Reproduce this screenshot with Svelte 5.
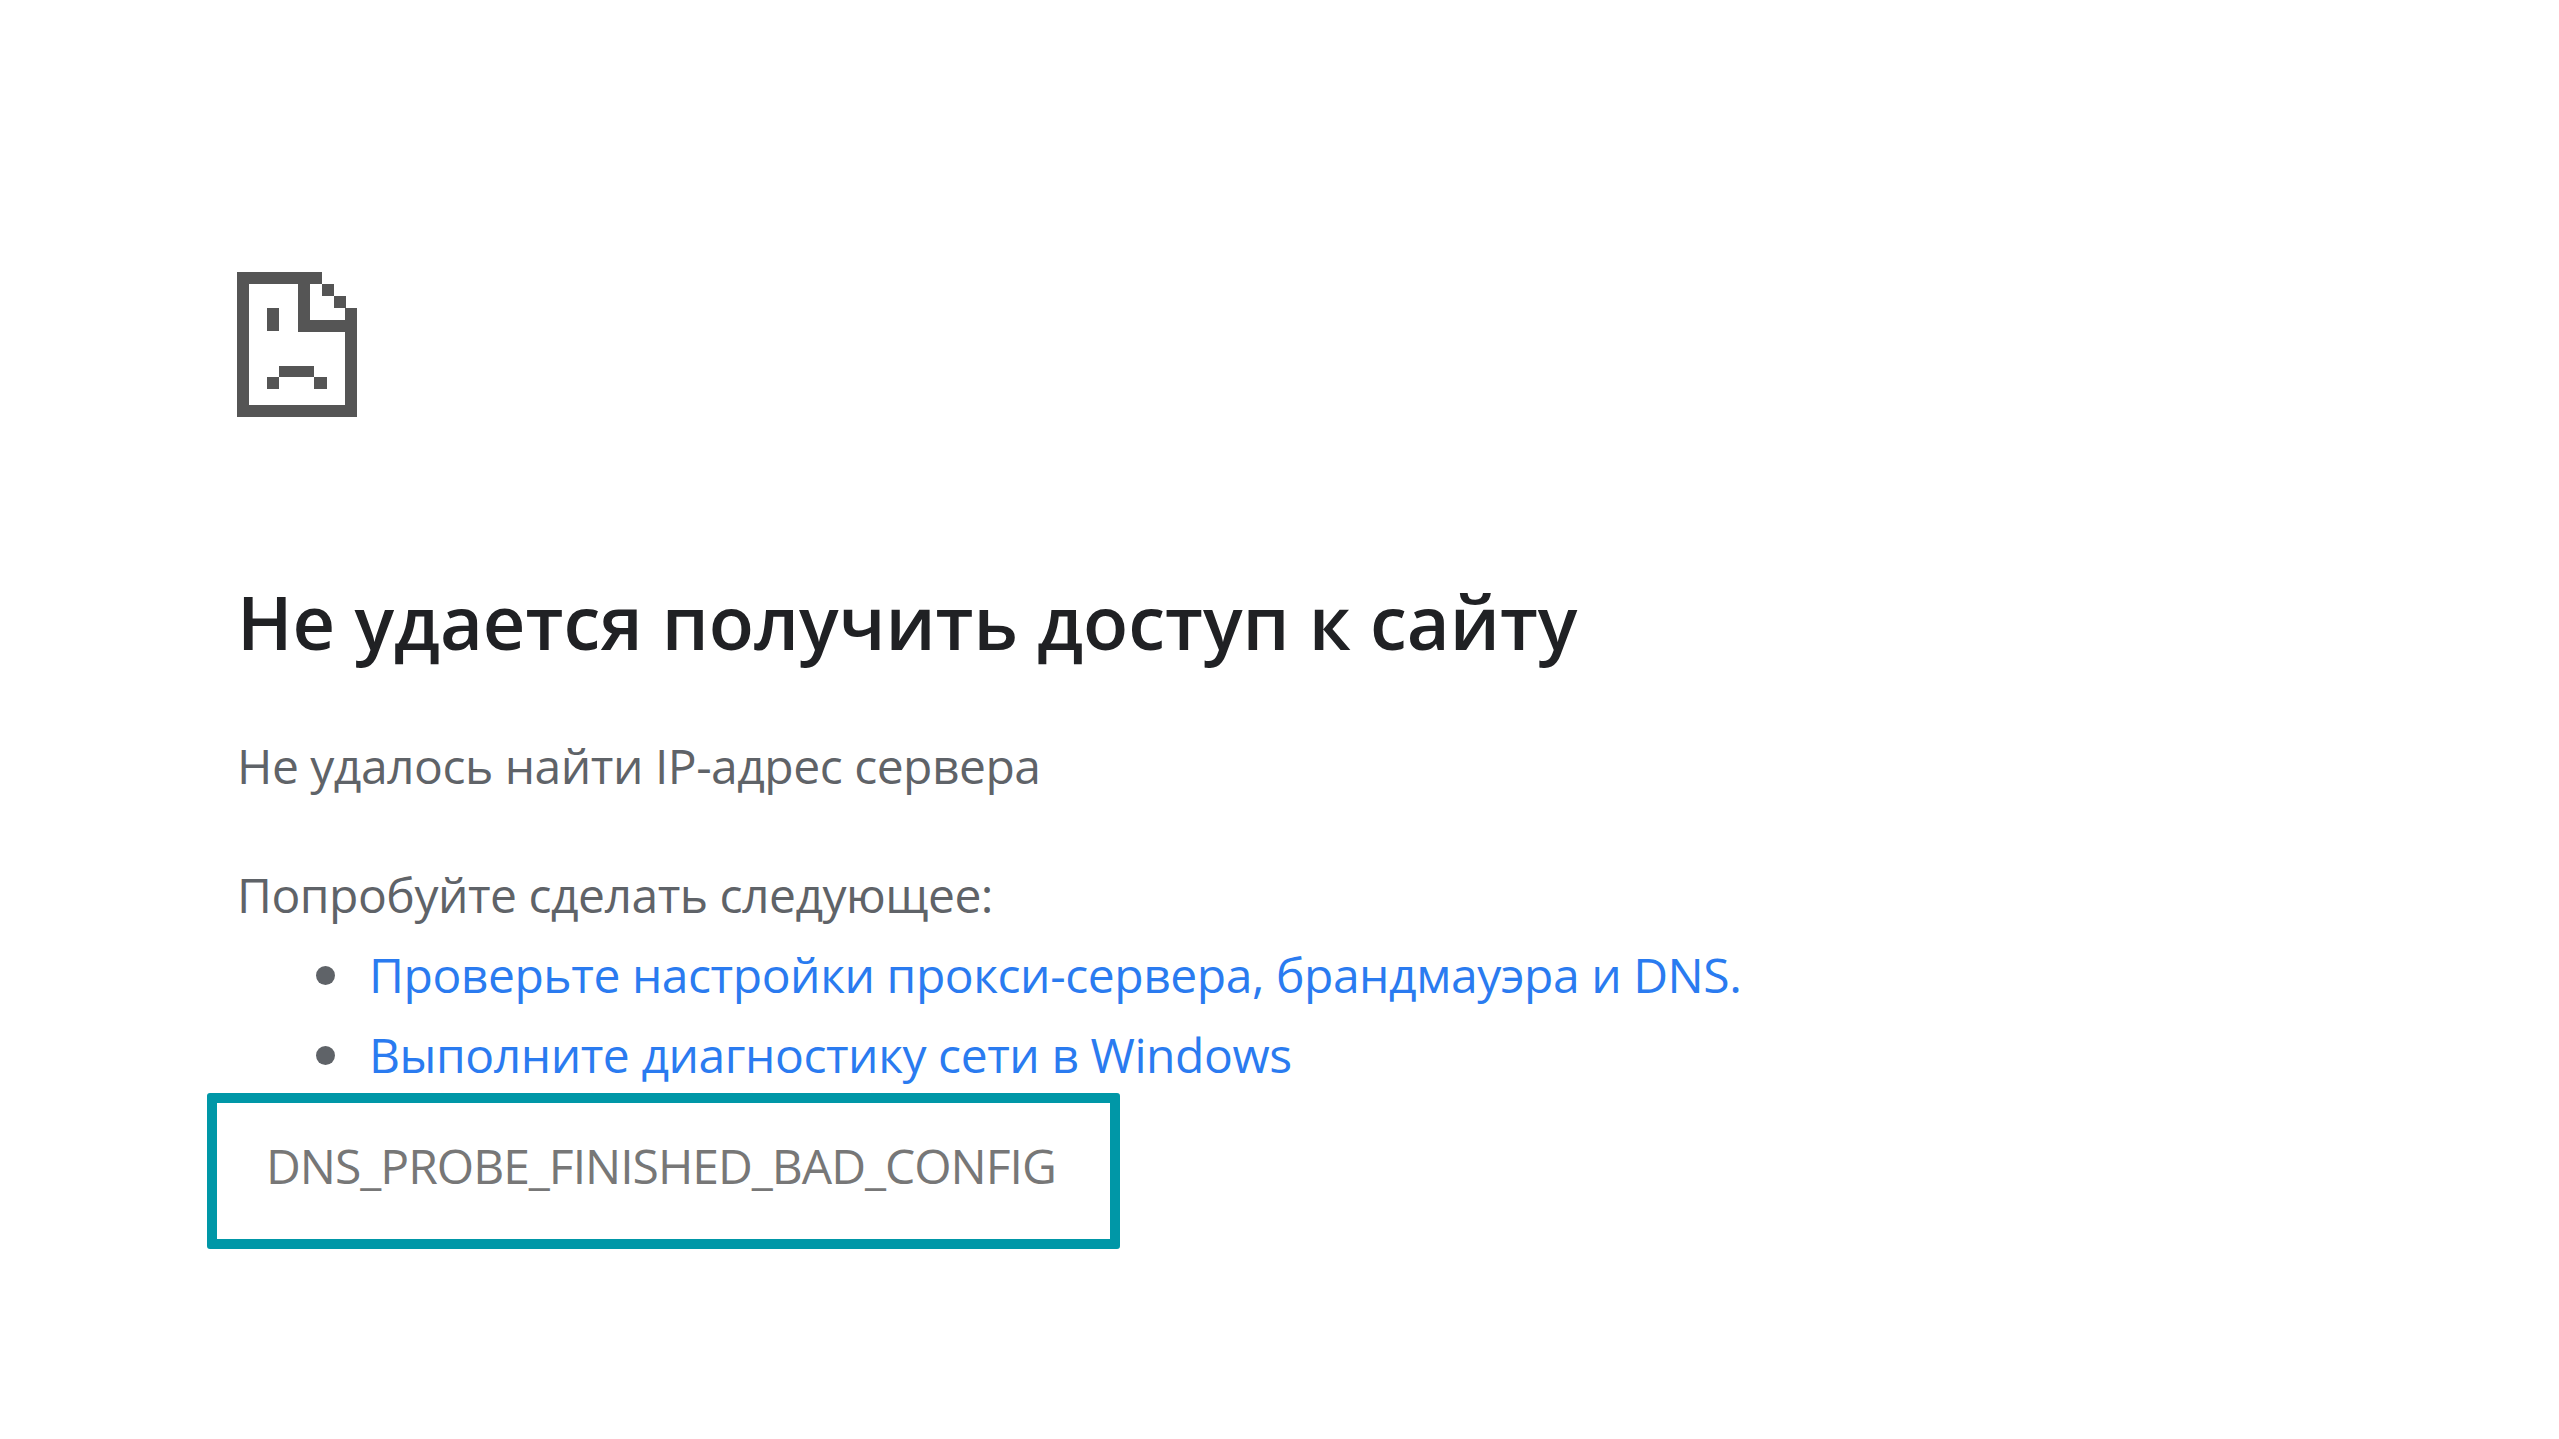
<script>
  const links = [
    "Проверьте настройки прокси-сервера, брандмауэра и DNS.",
    "Выполните диагностику сети в Windows"
  ];
</script>

<main class="page">
  <div class="content">
    <svg class="icon" viewBox="0 0 120 145" width="120" height="145" aria-hidden="true">
      <g fill="#555">
        <rect x="0" y="0" width="85" height="12" />
        <rect x="0" y="0" width="12" height="145" />
        <rect x="0" y="133" width="120" height="12" />
        <rect x="108" y="36" width="12" height="109" />
        <rect x="61" y="0" width="12" height="60" />
        <rect x="61" y="48" width="59" height="12" />
        <rect x="85" y="12" width="12" height="12" />
        <rect x="97" y="24" width="12" height="12" />
        <rect x="30" y="36" width="12" height="23" />
        <rect x="42" y="94" width="35" height="11" />
        <rect x="30" y="105" width="12" height="12" />
        <rect x="77" y="105" width="13" height="12" />
      </g>
    </svg>
    <h1>Не удается получить доступ к сайту</h1>
    <p class="reason">Не удалось найти IP-адрес сервера</p>
    <p class="try">Попробуйте сделать следующее:</p>
    <ul>
      {#each links as link}
        <li><a href="#top">{link}</a></li>
      {/each}
    </ul>
  </div>
  <div class="code">DNS_PROBE_FINISHED_BAD_CONFIG</div>
</main>

<style>
  :global(body) {
    margin: 0;
    background: #fff;
  }

  .page {
    padding: 272px 0 0 207px;
    font-family: "Open Sans", "Noto Sans", sans-serif;
    color: #5f6368;
    min-height: 1167px;
  }

  .content {
    margin-left: 30px;
  }

  .icon {
    display: block;
  }

  h1 {
    margin: 167px 0 0;
    font-size: 74px;
    line-height: 76px;
    font-weight: 600;
    color: #202124;
  }

  p {
    margin: 0;
    font-size: 48px;
    line-height: 64px;
    letter-spacing: -0.5px;
  }

  .reason {
    margin-top: 74px;
  }

  .try {
    margin-top: 65px;
  }

  ul {
    margin: 16px 0 0;
    padding-left: 79px;
    list-style: none;
  }

  li {
    display: flex;
    align-items: center;
    gap: 34px;
    font-size: 48px;
    line-height: 64px;
    letter-spacing: -0.45px;
    margin-bottom: 16px;
  }

  li::before {
    content: "";
    width: 19px;
    height: 19px;
    border-radius: 50%;
    background: #5f6368;
  }

  a {
    color: #2a7bf0;
    text-decoration: none;
  }

  .code {
    box-sizing: border-box;
    width: 913px;
    height: 156px;
    margin-top: -10px;
    padding: 31px 0 0 49px;
    border: 10px solid #0097a7;
    border-radius: 3px;
    font-size: 48px;
    line-height: 64px;
    letter-spacing: -1px;
    color: #777;
  }
</style>
